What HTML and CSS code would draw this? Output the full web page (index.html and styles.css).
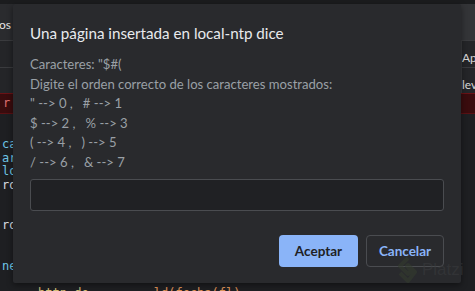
FILE: index.html
```html
<!DOCTYPE html>
<html lang="es">
<head>
<meta charset="utf-8">
<title>local-ntp</title>
<link rel="stylesheet" href="styles.css">
</head>
<body>
<div class="page">
  <div class="topstrip"></div>
  <div class="tabs">
    <div class="tab-left">os</div>
    <div class="tab-right"></div>
  </div>
  <div class="rowbar">
    <div class="cell-left"></div>
    <div class="cell-right">App</div>
  </div>
  <div class="rowbar rowbar2">
    <div class="cell-left"></div>
    <div class="cell-right">lev</div>
  </div>
  <div class="errrow"><span class="err-txt">r <u>c</u></span></div>
  <div class="code">
    <div class="ln c-cyan">car</div>
    <div class="ln c-cyan">ari</div>
    <div class="ln c-cyan">lor</div>
    <div class="ln c-white">rdr</div>
    <div class="ln"></div>
    <div class="ln c-purple">&nbsp;&nbsp;le</div>
    <div class="ln c-white">rdr</div>
    <div class="ln"></div>
    <div class="ln"></div>
    <div class="ln c-cyan">nes</div>
    <div class="ln c-last"><span class="c-yellow">&nbsp;&nbsp;&nbsp;&nbsp;&nbsp;bttn.de</span> <span class="c-white">.......</span> <span class="c-orange">ld(fecha(fl)</span></div>
  </div>
</div>

<div class="dialog">
  <h1 class="title">Una página insertada en local-ntp dice</h1>
  <div class="msg">
    <p>Caracteres: "$#(</p>
    <p>Digite el orden correcto de los caracteres mostrados:</p>
    <p>" --&gt; 0 ,&nbsp;&nbsp;&nbsp;# --&gt; 1</p>
    <p>$ --&gt; 2 ,&nbsp;&nbsp;&nbsp;% --&gt; 3</p>
    <p>( --&gt; 4 ,&nbsp;&nbsp;&nbsp;) --&gt; 5</p>
    <p>/ --&gt; 6 ,&nbsp;&nbsp;&nbsp;&amp; --&gt; 7</p>
  </div>
  <input class="field" type="text" aria-label="respuesta">
  <div class="actions">
    <button class="btn btn-primary" type="button">Aceptar</button>
    <button class="btn btn-secondary" type="button">Cancelar</button>
  </div>
</div>

<div class="watermark">
  <svg class="wm-logo" width="24" height="28" viewBox="0 0 24 28" aria-hidden="true">
    <path d="M12 2 L4 10 L12 18 L15 15 L11 10 L12 9 L19 16 L12 25 L4 17" fill="none" stroke="#343d2e" stroke-width="4" stroke-linejoin="round"/>
  </svg>
  <span class="wm-text">Platzi</span>
</div>
</body>
</html>
```

FILE: styles.css
```css
* { box-sizing: border-box; }
html, body { margin: 0; padding: 0; }
body {
  width: 475px;
  height: 291px;
  overflow: hidden;
  background: #1d1e20;
  font-family: "Lato", "Noto Sans", sans-serif;
  position: relative;
}
.page {
  width: 475px;
  height: 291px;
  display: flex;
  flex-direction: column;
}
.topstrip { height: 4px; flex: none; background: #1b1c1e; }
.tabs {
  height: 36px;
  flex: none;
  display: flex;
  background: #2a2b2e;
}
.tab-left {
  width: 40px;
  color: #e6e6e6;
  font-size: 12px;
  padding: 13px 0 0 0;
  text-indent: -1px;
}
.tab-right { flex: 1; background: #333437; }
.rowbar {
  height: 27px;
  flex: none;
  display: flex;
  border-top: 1px solid #3a3b3e;
  background: #242528;
}
.rowbar2 { height: 26px; }
.cell-left { flex: 1; }
.cell-right {
  width: 14px;
  color: #d7d7d7;
  font-size: 12px;
  padding-top: 9px;
  overflow: hidden;
  white-space: nowrap;
  border-left: 1px solid #3a3b3e;
}
.errrow {
  height: 21px;
  flex: none;
  background: #3a0c0e;
  border-top: 1px solid #6a1216;
  border-bottom: 1px solid #5a1013;
  color: #e07070;
  font-family: "DejaVu Sans Mono", monospace;
  font-size: 12px;
  padding: 2px 0 0 3px;
}
.code {
  flex: none;
  background: #1e1f22;
  font-family: "DejaVu Sans Mono", monospace;
  font-size: 12px;
  padding-top: 24px;
  padding-left: 2px;
}
.ln { height: 13.5px; line-height: 13.5px; white-space: nowrap; }
.c-cyan { color: #6fc6e6; }
.c-white { color: #d7dbe0; }
.c-purple { color: #a58ee0; }
.c-yellow { color: #d8c07a; }
.c-orange { color: #e0955a; }
.c-last { margin-top: 14px; }

.dialog {
  position: absolute;
  left: 13px;
  top: 4px;
  width: 448px;
  height: 279px;
  background: #292a2d;
  border-radius: 2px;
  box-shadow: 0 2px 6px rgba(0,0,0,0.45);
  padding: 19px 17px 0 17px;
  display: flex;
  flex-direction: column;
}
.title {
  margin: 0;
  font-size: 15.2px;
  font-weight: 400;
  color: #e8eaed;
  line-height: 20px;
}
.msg {
  margin-top: 12px;
  color: #9aa0a6;
  font-size: 13.1px;
}
.msg p { margin: 0; line-height: 19.5px; }
.field {
  margin-top: 7px;
  height: 32px;
  width: 414px;
  background: #202124;
  border: 1px solid #4a4c50;
  border-radius: 3px;
  outline: none;
  color: #e8eaed;
}
.actions {
  margin-top: 24px;
  display: flex;
  justify-content: flex-end;
  gap: 8px;
}
.btn {
  height: 32px;
  border-radius: 4px;
  font-family: "Lato", "Noto Sans", sans-serif;
  font-size: 13.5px;
  font-weight: 700;
  padding: 0;
  cursor: pointer;
}
.btn-primary {
  width: 79px;
  background: #8ab4f8;
  color: #202124;
  border: none;
}
.btn-secondary {
  width: 78px;
  background: transparent;
  color: #8ab4f8;
  border: 1px solid #4a4c50;
}
.watermark {
  position: absolute;
  left: 396px;
  top: 256px;
  display: flex;
  align-items: center;
  gap: 2px;
  opacity: 0.55;
}
.wm-text {
  font-family: "Liberation Sans", sans-serif;
  font-size: 17px;
  color: #3a3c3e;
}
```
